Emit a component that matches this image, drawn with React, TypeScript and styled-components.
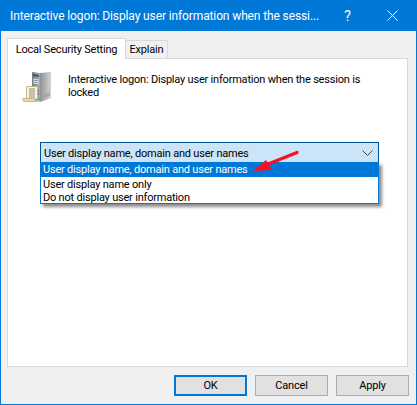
import React from 'react';
import styled, { createGlobalStyle } from 'styled-components';

const GlobalStyle = createGlobalStyle`
  html, body {
    margin: 0;
    padding: 0;
    background: #f0f0f0;
  }
  * {
    box-sizing: border-box;
  }
`;

const Window = styled.div`
  width: 417px;
  height: 405px;
  display: flex;
  flex-direction: column;
  border: 1px solid #0078d7;
  border-top: 0;
  background: #f0f0f0;
  color: #000;
  font-family: Roboto, 'Liberation Sans', sans-serif;
  font-size: 11px;
  letter-spacing: -0.2px;
  overflow: hidden;
`;

const TitleBar = styled.header`
  height: 31px;
  flex: none;
  display: flex;
  align-items: center;
  padding-left: 9px;
  background: #0078d7;
  color: #fff;
  font-size: 12px;
  letter-spacing: -0.12px;
`;

const Title = styled.span`
  width: 315px;
  white-space: nowrap;
`;

const TitleButton = styled.span`
  width: 45px;
  display: flex;
  justify-content: center;
  font-size: 14px;
`;

const Body = styled.main`
  flex: 1;
  display: flex;
  flex-direction: column;
  padding: 7px 7px 8px 6px;
`;

const Tabs = styled.div`
  height: 20px;
  flex: none;
  display: flex;
  align-items: flex-end;
  position: relative;
  z-index: 1;
`;

const Tab = styled.div<{ $active?: boolean }>`
  height: ${p => (p.$active ? '21px' : '18px')};
  width: ${p => (p.$active ? '119px' : '43px')};
  display: flex;
  align-items: center;
  justify-content: center;
  border: 1px solid #d9d9d9;
  border-bottom: 0;
  background: ${p => (p.$active ? '#fff' : '#f0f0f0')};
  margin-bottom: ${p => (p.$active ? '-1px' : '0')};
  margin-left: ${p => (p.$active ? '0' : '-1px')};
`;

const Panel = styled.section`
  height: 309px;
  flex: none;
  width: 401px;
  padding: 12px 15px 0 14px;
  background: #fff;
  border: 1px solid #d9d9d9;
`;

const Heading = styled.div`
  display: flex;
  gap: 15px;
`;

const Description = styled.p`
  margin: 2px 0 0;
  width: 300px;
  line-height: 13px;
`;

const ComboWrap = styled.div`
  position: relative;
  width: 339px;
  margin: 39px 0 0 18px;
`;

const Combo = styled.div`
  height: 21px;
  display: flex;
  align-items: center;
  justify-content: space-between;
  padding: 1px 5px 0 3px;
  background: #cce4f7;
  border: 1px solid #005499;
`;

const Menu = styled.ul`
  position: absolute;
  top: 20px;
  left: 0;
  width: 100%;
  margin: 0;
  padding: 0;
  list-style: none;
  background: #fff;
  border: 1px solid #0078d7;
  border-top: 0;
  box-shadow: 3px 3px 3px rgba(0, 0, 0, 0.45);
`;

const MenuItem = styled.li<{ $selected?: boolean }>`
  height: ${p => (p.$selected ? '15px' : '13px')};
  line-height: ${p => (p.$selected ? '16px' : '15px')};
  padding-left: 2px;
  background: ${p => (p.$selected ? '#0078d7' : 'transparent')};
  color: ${p => (p.$selected ? '#fff' : '#000')};
`;

const Annotation = styled.svg`
  position: absolute;
  top: 7px;
  left: 210px;
  width: 60px;
  height: 28px;
  z-index: 2;
`;

const Footer = styled.footer`
  display: flex;
  justify-content: flex-end;
  gap: 8px;
  margin-top: 8px;
`;

const Button = styled.button<{ $primary?: boolean }>`
  width: 73px;
  height: 21px;
  padding: 0;
  font: inherit;
  letter-spacing: inherit;
  color: #000;
  background: #e1e1e1;
  border: ${p => (p.$primary ? '2px solid #0078d7' : '1px solid #adadad')};
`;

const ServerIcon = () => (
  <svg width="31" height="32" viewBox="0 0 31 32" style={{ flex: 'none' }}>
    <defs>
      <linearGradient id="front" x1="0" x2="1" y1="0" y2="0">
        <stop offset="0" stopColor="#6f7b80" />
        <stop offset="1" stopColor="#a4afb3" />
      </linearGradient>
      <linearGradient id="side" x1="0" x2="1" y1="0" y2="0">
        <stop offset="0" stopColor="#8f9294" />
        <stop offset="1" stopColor="#d4d4d4" />
      </linearGradient>
    </defs>
    <path d="M10 1 18 2V31L10 28Z" fill="url(#front)" />
    <path d="M18 2 29 1V27L18 31Z" fill="url(#side)" />
    <path d="M11 3 17 4V6L11 5Z" fill="#4d575c" />
    <path d="M11 8 17 9M11 10 17 11M11 12 17 13" stroke="#dfe6e8" strokeWidth="1" />
    <path d="M16 20 17 20M16 23 17 23" stroke="#3d474c" strokeWidth="1" />
    <rect x="15" y="27" width="3" height="2" fill="#63c23c" />
    <path d="M22 24 28 22M22 26 28 24" stroke="#9c9c9c" strokeWidth="1" />
    <path d="M4.5 15.5H15.5V28H4.5Z" fill="#f8f2d8" stroke="#c4b687" strokeWidth="1" />
    <path d="M7 18H13M7 20H13M7 22H13M7 24H13M7 26H13" stroke="#8f8f88" strokeWidth="1" />
    <path d="M1 27.5H11C12 27.5 12 30.5 15 30.5H3C1 30.5 0 28.5 1 27.5Z" fill="#ecdca2" stroke="#c4b687" strokeWidth="1" />
  </svg>
);

const options = [
  'User display name, domain and user names',
  'User display name only',
  'Do not display user information',
];

export default function App() {
  return (
    <Window>
      <GlobalStyle />
      <TitleBar>
        <Title>Interactive logon: Display user information when the sessi...</Title>
        <TitleButton>?</TitleButton>
        <TitleButton>
          <svg width="11" height="11" viewBox="0 0 11 11">
            <path d="M.5.5 10.5 10.5M10.5.5.5 10.5" stroke="#fff" strokeWidth="1" fill="none" />
          </svg>
        </TitleButton>
      </TitleBar>
      <Body>
        <Tabs>
          <Tab $active>Local Security Setting</Tab>
          <Tab>Explain</Tab>
        </Tabs>
        <Panel>
          <Heading>
            <ServerIcon />
            <Description>
              Interactive logon: Display user information when the session is locked
            </Description>
          </Heading>
          <ComboWrap>
            <Combo>
              <span>{options[0]}</span>
              <svg width="11" height="6" viewBox="0 0 11 6">
                <path d="M.5.5 5.5 5.5 10.5.5" stroke="#444" strokeWidth="1" fill="none" />
              </svg>
            </Combo>
            <Menu>
              {options.map((option, i) => (
                <MenuItem key={option} $selected={i === 0}>
                  {option}
                </MenuItem>
              ))}
            </Menu>
            <Annotation viewBox="0 0 60 28">
              <path d="M47 3.5 17 15.5" stroke="#fb0f22" strokeWidth="3.4" strokeLinecap="round" />
              <path d="M3 22 16 11 22 21Z" fill="#fb0f22" />
            </Annotation>
          </ComboWrap>
        </Panel>
        <Footer>
          <Button $primary>OK</Button>
          <Button>Cancel</Button>
          <Button>Apply</Button>
        </Footer>
      </Body>
    </Window>
  );
}
